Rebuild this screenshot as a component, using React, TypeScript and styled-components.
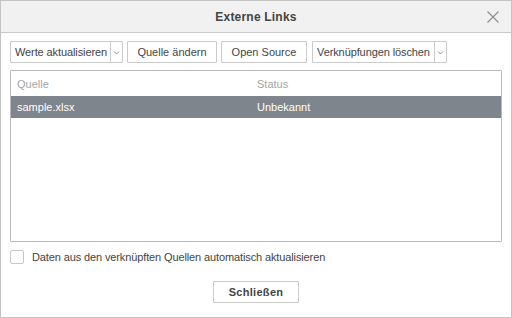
import React, { useState } from 'react'
import styled, { createGlobalStyle } from 'styled-components'

const GlobalStyle = createGlobalStyle`
    * {
        box-sizing: border-box;
    }
    body {
        margin: 0;
        font-family: 'Liberation Sans', Arial, sans-serif;
        background: #ffffff;
    }
`

const Dialog = styled.div`
    width: 512px;
    height: 318px;
    border: 1px solid #c3c3c3;
    background: #ffffff;
    display: flex;
    flex-direction: column;
`

const Header = styled.div`
    height: 32px;
    flex-shrink: 0;
    background: #f1f1f1;
    border-bottom: 1px solid #cbcbcb;
    display: flex;
    align-items: center;
    justify-content: center;
    position: relative;
`

const Title = styled.div`
    font-size: 12px;
    font-weight: 700;
    color: #444444;
    letter-spacing: 0.2px;
`

const CloseIcon = styled.button`
    position: absolute;
    right: 12px;
    top: 10px;
    width: 12px;
    height: 12px;
    padding: 0;
    border: none;
    background: transparent;
    display: flex;
`

const Body = styled.div`
    flex: 1;
    padding: 8px 9px 0 9px;
    display: flex;
    flex-direction: column;
`

const Toolbar = styled.div`
    display: flex;
    gap: 4px;
    height: 22px;
`

const ToolButton = styled.button<{ $width: number; $gapBefore?: number }>`
    width: ${(p) => p.$width}px;
    margin-left: ${(p) => p.$gapBefore ?? 0}px;
    height: 22px;
    border: 1px solid #cbcbcb;
    border-radius: 1px;
    background: #ffffff;
    color: #444444;
    font-family: 'Liberation Sans', Arial, sans-serif;
    font-size: 11px;
    padding: 0;
    display: flex;
    align-items: center;
    justify-content: center;
`

const SplitButton = styled.div<{ $width: number; $gapBefore?: number }>`
    width: ${(p) => p.$width}px;
    margin-left: ${(p) => p.$gapBefore ?? 0}px;
    height: 22px;
    border: 1px solid #cbcbcb;
    border-radius: 1px;
    background: #ffffff;
    display: flex;
`

const SplitMain = styled.div`
    flex: 1;
    display: flex;
    align-items: center;
    padding-left: 4px;
    font-size: 11px;
    letter-spacing: -0.1px;
    color: #444444;
    white-space: nowrap;
`

const SplitArrow = styled.div`
    width: 12px;
    border-left: 1px solid #cbcbcb;
    display: flex;
    align-items: center;
    justify-content: center;
`

const LinkTable = styled.div`
    margin-top: 7px;
    height: 172px;
    border: 1px solid #b9b9b9;
    border-radius: 1px;
    display: flex;
    flex-direction: column;
`

const Row = styled.div<{ $head?: boolean; $selected?: boolean }>`
    display: grid;
    grid-template-columns: 240px 1fr;
    height: ${(p) => (p.$head ? 25 : 22)}px;
    align-items: center;
    font-size: 11px;
    background: ${(p) => (p.$selected ? '#7e858c' : 'transparent')};
    color: ${(p) => (p.$head ? '#a6a6a6' : p.$selected ? '#ffffff' : '#444444')};
`

const Cell = styled.div`
    padding-left: 6px;
    white-space: nowrap;
`

const CheckRow = styled.label`
    margin-top: 8px;
    display: flex;
    align-items: center;
    height: 14px;
    font-size: 11px;
    letter-spacing: -0.12px;
    color: #444444;
    cursor: pointer;
`

const CheckBox = styled.span<{ $checked: boolean }>`
    width: 14px;
    height: 14px;
    border: 1px solid #c8c8c8;
    border-radius: 2px;
    background: #ffffff;
    margin-right: 8px;
    display: flex;
    align-items: center;
    justify-content: center;
`

const Footer = styled.div`
    margin-top: 17px;
    display: flex;
    justify-content: center;
`

const CloseButton = styled.button`
    width: 86px;
    height: 22px;
    border: 1px solid #cbcbcb;
    border-radius: 1px;
    background: #ffffff;
    color: #444444;
    font-family: 'Liberation Sans', Arial, sans-serif;
    font-size: 11px;
    font-weight: 700;
    letter-spacing: 0.3px;
    padding: 0;
`

const Chevron = () => (
    <svg width="7" height="5" viewBox="0 0 7 5">
        <path d="M1 1.5 L3.5 4 L6 1.5" fill="none" stroke="#8a8a8a" strokeWidth="1" />
    </svg>
)

const links = [{ source: 'sample.xlsx', status: 'Unbekannt' }]

export default function App() {
    const [autoUpdate, setAutoUpdate] = useState(false)

    return (
        <>
            <GlobalStyle />
            <Dialog>
                <Header>
                    <Title>Externe Links</Title>
                    <CloseIcon aria-label="close">
                        <svg width="12" height="12" viewBox="0 0 12 12">
                            <path d="M0.5 0.5 L11.5 11.5 M11.5 0.5 L0.5 11.5" stroke="#8c8c8c" strokeWidth="1.1" />
                        </svg>
                    </CloseIcon>
                </Header>
                <Body>
                    <Toolbar>
                        <SplitButton $width={113}>
                            <SplitMain>Werte aktualisieren</SplitMain>
                            <SplitArrow>
                                <Chevron />
                            </SplitArrow>
                        </SplitButton>
                        <ToolButton $width={90}>Quelle ändern</ToolButton>
                        <ToolButton $width={86}>Open Source</ToolButton>
                        <SplitButton $width={135} $gapBefore={1}>
                            <SplitMain>Verknüpfungen löschen</SplitMain>
                            <SplitArrow>
                                <Chevron />
                            </SplitArrow>
                        </SplitButton>
                    </Toolbar>

                    <LinkTable>
                        <Row $head>
                            <Cell>Quelle</Cell>
                            <Cell>Status</Cell>
                        </Row>
                        {links.map((link) => (
                            <Row key={link.source} $selected>
                                <Cell>{link.source}</Cell>
                                <Cell>{link.status}</Cell>
                            </Row>
                        ))}
                    </LinkTable>

                    <CheckRow onClick={() => setAutoUpdate(!autoUpdate)}>
                        <CheckBox $checked={autoUpdate}>
                            {autoUpdate && (
                                <svg width="10" height="8" viewBox="0 0 10 8">
                                    <path d="M1 4 L4 7 L9 1" fill="none" stroke="#444" strokeWidth="1.5" />
                                </svg>
                            )}
                        </CheckBox>
                        Daten aus den verknüpften Quellen automatisch aktualisieren
                    </CheckRow>

                    <Footer>
                        <CloseButton>Schließen</CloseButton>
                    </Footer>
                </Body>
            </Dialog>
        </>
    )
}
